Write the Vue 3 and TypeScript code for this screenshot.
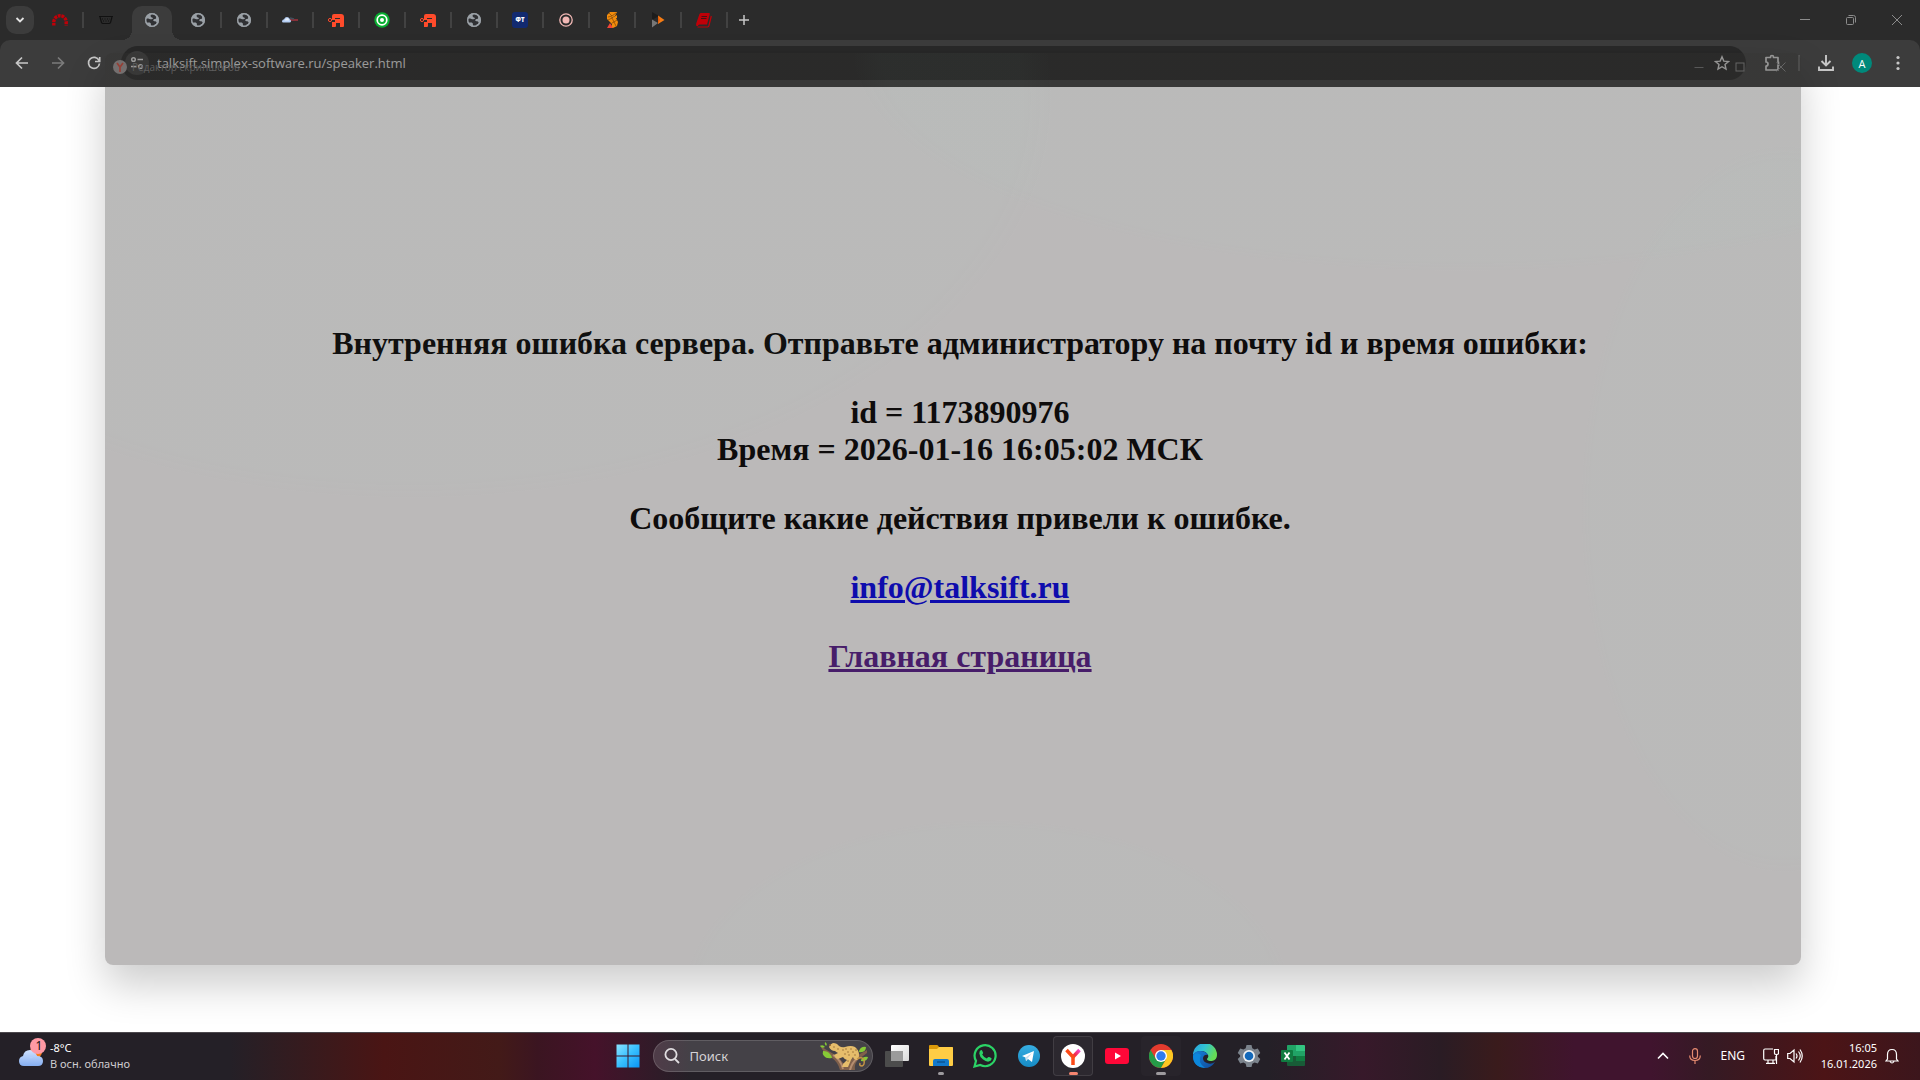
<script setup lang="ts">
import { ref } from 'vue'

interface Tab {
  icon: string
  title: string
  separator: boolean
}

const tabs: Tab[] = [
  { icon: 'arch', title: 'Вкладка 1', separator: true },
  { icon: 'basket', title: 'Вкладка 2', separator: false },
  { icon: 'globe', title: 'talksift', separator: false },
  { icon: 'globe', title: 'Вкладка 4', separator: true },
  { icon: 'globe', title: 'Вкладка 5', separator: true },
  { icon: 'cloud', title: 'Вкладка 6', separator: true },
  { icon: 'robot', title: 'Вкладка 7', separator: true },
  { icon: 'target', title: 'Вкладка 8', separator: true },
  { icon: 'robot', title: 'Вкладка 9', separator: true },
  { icon: 'globe', title: 'Вкладка 10', separator: true },
  { icon: 'ft', title: 'Вкладка 11', separator: true },
  { icon: 'record', title: 'Вкладка 12', separator: true },
  { icon: 'snake', title: 'Вкладка 13', separator: true },
  { icon: 'play', title: 'Вкладка 14', separator: true },
  { icon: 'book', title: 'Вкладка 15', separator: true },
]
const activeTab = 2

const url = ref('talksift.simplex-software.ru/speaker.html')
const search = ref('')
</script>

<template>
  <div class="desktop">
    <header class="browser">
      <div class="tab-strip">
        <button class="tab-search" aria-label="Поиск вкладок">
          <svg width="10" height="10" viewBox="0 0 10 10"><path d="M1.5 3l3.500 3.500L8.500 3" fill="none" stroke="#e3e3e3" stroke-width="1.800" /></svg>
        </button>
        <button
          v-for="(tab, i) in tabs"
          :key="i"
          class="tab"
          :class="{ active: i === activeTab, divided: tab.separator }"
          :aria-label="tab.title"
        >
          <svg class="favicon" width="16" height="16" viewBox="0 0 16 16">
            <g v-if="tab.icon === 'globe'">
              <circle cx="8" cy="8" r="7" fill="#9aa0a6" />
              <path d="M8.500 1.600c-1.500.8-2.300 1.800-1.700 3.100.4.9 2 .5 2.100 1.600.1 1.100-1.300 1-2.700 1-1.300 0-1.500-.7-2.700-.7-.9 0-1.600.5-2 1.200.1 1 .5 2.300 1.100 3.100 1.200-.4 2.900-.6 3.800.1.900.7.200 1.700.7 2.400.3.500.9.900 1.500 1.100 1.300-.3 1.300-1.300 2.100-2.100.8-.7 1.900-.4 2-1.500.1-1-.9-1.700-2.300-1.700-1 0-1.400-.7-1-1.400.5-.8 1.800-.4 2.500-1.200.5-.6.200-1.400 0-2.200-.9-1.500-2-2.400-3.400-2.800z" fill="#303134" />
              <circle cx="8" cy="8" r="6.300" fill="none" stroke="#9aa0a6" stroke-width="1.400" />
            </g>
            <g v-else-if="tab.icon === 'arch'">
              <path d="M1.800 13.500V10A6.200 6.200 0 0 1 14.200 10v3.500" fill="none" stroke="#c00008" stroke-width="3.400" stroke-dasharray="2.800 .8" />
            </g>
            <g v-else-if="tab.icon === 'basket'" fill="none" stroke="#111">
              <path d="M1 4.500h14M2 5l1.500 5.500q.5 1 1.500 1h6q1 0 1.500-1L14 5" stroke-width="1.200" />
              <path d="M4 7h8M5 9h6" stroke-dasharray="1 1.500" />
            </g>
            <g v-else-if="tab.icon === 'cloud'">
              <path d="M8 8h8" stroke="#873039" stroke-width="2" />
              <path d="M8 6l4 1" stroke="#40505c" stroke-width="1.500" />
              <path d="M0 9.500q0-2 2-2.200Q3 5 5 5q2.500 0 3 2.500 1.200.5 1 2-.2 1-1.500 1H1.300Q0 10.500 0 9.500z" fill="#b4cdf2" />
              <path d="M2.500 8.500Q3.500 6 5.500 6q1.500.5 1.500 2.500z" fill="#e8f0fc" />
            </g>
            <g v-else-if="tab.icon === 'robot'">
              <path d="M6 2h7q3 0 3 3v9q0 1-1 1h-3v-4H8v3q0 1-1 1H4v-5h3V8H4V4q0-2 2-2z" fill="#ff4b2b" />
              <path d="M7 6.500h5" stroke="#2b2b2b" stroke-width="1" />
              <circle cx="2" cy="8" r="1.600" fill="#2b2b2b" stroke="#ff4b2b" />
            </g>
            <g v-else-if="tab.icon === 'target'" fill="none">
              <circle cx="8" cy="8" r="7.700" fill="#08ae30" />
              <circle cx="8" cy="8" r="4.800" stroke="#fff" stroke-width="1.700" />
              <circle cx="8" cy="8" r="2" fill="#fff" />
            </g>
            <g v-else-if="tab.icon === 'ft'">
              <rect width="16" height="16" rx="3" fill="#122a70" />
              <text x="8" y="10" text-anchor="middle" class="ft-label">ФТ</text>
            </g>
            <g v-else-if="tab.icon === 'record'">
              <circle cx="8" cy="8" r="6.200" fill="none" stroke="#f2b8b5" stroke-width="1.300" />
              <circle cx="8" cy="8" r="3.500" fill="#f2b8b5" />
            </g>
            <g v-else-if="tab.icon === 'snake'">
              <path d="M3 3l3-3h7l-2 4-4 2h5l2 4-1 4-4 2H7l1-4-5-5z" fill="#f28c0c" />
              <path d="M3 16l3-5 3 5z" fill="#f04438" />
              <path d="M13 0v6H8l5-3z" fill="#f28c0c" />
              <path d="M5 1l3 3 4-3M4 5l4-1M4 8l4-2 2 4 3-2M8 11l2-1 2 4" fill="none" stroke="#6b3906" stroke-width=".6" />
            </g>
            <g v-else-if="tab.icon === 'play'">
              <path d="M2 0l7 4-7 4z" fill="#1c1c1c" />
              <path d="M2 7.500l6 3.500-6 4.500z" fill="#777" />
              <path d="M8 3.500l6.500 4.500L8 12z" fill="#f57c14" />
              <path d="M8 3.500L10 8l-2 4z" fill="#e45b08" />
            </g>
            <g v-else>
              <path d="M5 1h8q1 0 .8 1L11 12.500H3.500q-1.500 0-1.500 1.500H.500q-.6-1-.3-2.500L3.500 2Q4 1 5 1z" fill="#c00008" />
              <path d="M15.300 4L13 13.500q-.3 1.500-1.500 1.500H1.500" fill="none" stroke="#c00008" stroke-width="1.200" />
              <path d="M5.500 4.500h5.500M5 6.500h5.500" stroke="#3c1214" stroke-width=".9" />
            </g>
          </svg>
        </button>
        <button class="new-tab" aria-label="Новая вкладка">
          <svg width="12" height="12" viewBox="0 0 12 12"><path d="M6 1v10M1 6h10" stroke="#c7c7c7" stroke-width="1.500" /></svg>
        </button>
        <div class="window-controls">
          <button aria-label="Свернуть"><svg width="12" height="12" viewBox="0 0 12 12"><path d="M1 5.500h10" stroke="#8c8c8c" /></svg></button>
          <button aria-label="Восстановить"><svg width="12" height="12" viewBox="0 0 12 12" fill="none" stroke="#8c8c8c"><rect x="1.500" y="3.500" width="7" height="7" rx="1" /><path d="M3.500 1.500h5q2 0 2 2v5" /></svg></button>
          <button aria-label="Закрыть"><svg width="12" height="12" viewBox="0 0 12 12"><path d="M1 1l10 10M11 1L1 11" stroke="#8c8c8c" /></svg></button>
        </div>
      </div>

      <div class="toolbar">
        <button class="nav" aria-label="Назад"><svg width="16" height="16" viewBox="0 0 16 16" fill="none" stroke="#c7c7c7" stroke-width="1.700"><path d="M14 8H3M8 2.500L2.500 8 8 13.500" /></svg></button>
        <button class="nav" aria-label="Вперёд"><svg width="16" height="16" viewBox="0 0 16 16" fill="none" stroke="#7b7b7b" stroke-width="1.700"><path d="M2 8h11M8 2.500L13.500 8 8 13.500" /></svg></button>
        <button class="nav" aria-label="Обновить"><svg width="16" height="16" viewBox="0 0 16 16" fill="none" stroke="#c7c7c7" stroke-width="1.700"><path d="M13 5.500A5.500 5.500 0 1 0 13.500 8.500M13.700 2v4.500H9" /></svg></button>
        <div class="omnibox">
          <button class="site-info" aria-label="Сведения о сайте">
            <svg width="14" height="14" viewBox="0 0 14 14" fill="none" stroke="#d0d0d0" stroke-width="1.500"><circle cx="3.500" cy="3.500" r="1.800" /><path d="M7.500 3.500H13M1 10.500h5.500" /><circle cx="10.500" cy="10.500" r="1.800" /></svg>
          </button>
          <input v-model="url" class="url" type="text" aria-label="Адресная строка" />
          <button class="star" aria-label="Добавить в закладки">
            <svg width="16" height="16" viewBox="0 0 16 16"><path d="M8 1.800l1.800 4.300 4.700.4L11 9.500l1 4.600-4-2.400-4 2.400 1-4.600-3.500-3 4.700-.4z" fill="none" stroke="#c7c7c7" stroke-width="1.400" /></svg>
          </button>
        </div>
        <div class="tools">
          <button class="tool" aria-label="Расширения">
            <svg width="18" height="18" viewBox="0 0 18 18"><path d="M3 3.500h4.500V3q0-1.500 1.500-1.500T10.500 3v.5H15V8h.5v3H15v5H3v-4q2 0 2-2T3 8z" fill="none" stroke="#c7c7c7" stroke-width="1.700" stroke-linejoin="round" /></svg>
          </button>
          <span class="tool-divider"></span>
          <button class="tool" aria-label="Загрузки">
            <svg width="18" height="18" viewBox="0 0 18 18" fill="none" stroke="#c7c7c7" stroke-width="1.900"><path d="M9 1v10M4.500 7L9 11.500 13.500 7M2 12.500V16h14v-3.500" /></svg>
          </button>
          <button class="avatar" aria-label="Профиль">A</button>
          <button class="tool" aria-label="Меню">
            <svg width="18" height="18" viewBox="0 0 18 18" fill="#c7c7c7"><circle cx="9" cy="3.500" r="1.600" /><circle cx="9" cy="9" r="1.600" /><circle cx="9" cy="14.500" r="1.600" /></svg>
          </button>
        </div>
      </div>
    </header>

    <main class="page">
      <p>Внутренняя ошибка сервера. Отправьте администратору на почту id и время ошибки:</p>
      <p>id = 1173890976<br />Время = 2026-01-16 16:05:02 МСК</p>
      <p>Сообщите какие действия привели к ошибке.</p>
      <p><a class="mail" href="mailto:info@talksift.ru">info@talksift.ru</a></p>
      <p><a class="home" href="#">Главная страница</a></p>
    </main>

    <!-- Screenshot editor window fading in over the browser -->
    <section class="editor" aria-label="Редактор скриншотов">
      <div class="editor-title">
        <svg width="14" height="14" viewBox="0 0 14 14"><circle cx="7" cy="7" r="7" fill="#746f6f" /><path d="M4 3l3 4 3-4M7 7v5" fill="none" stroke="#963f35" stroke-width="1.700" /></svg>
        <span>Редактор скриншотов</span>
        <div class="editor-controls">
          <svg width="10" height="10" viewBox="0 0 10 10"><path d="M.500 5.500h9" stroke="#585858" /></svg>
          <svg width="10" height="10" viewBox="0 0 10 10"><rect x="1" y="1" width="8" height="8" fill="none" stroke="#656565" /></svg>
          <svg width="10" height="10" viewBox="0 0 10 10"><path d="M.500.500l9 9M9.500.500l-9 9" stroke="#656565" /></svg>
        </div>
      </div>
    </section>

    <footer class="taskbar">
      <button class="weather">
        <svg width="28" height="38" viewBox="0 0 28 38">
          <defs><linearGradient id="cloud" x1="0" y1="0" x2="0" y2="1"><stop offset="0" stop-color="#cfe2ff" /><stop offset="1" stop-color="#86aef0" /></linearGradient></defs>
          <circle cx="17" cy="15" r="6" fill="#f57a18" />
          <path d="M5 29q-5 0-5-5 0-4 4-5 1-6 7-6 5 0 7 6 6 0 6 5 0 5-5 5z" fill="url(#cloud)" />
          <path d="M5 19q4-2 7 2 3-3 6-2" fill="none" stroke="#b5cffb" />
          <circle cx="19" cy="9" r="8" fill="#ff99a4" />
          <text x="20" y="13" text-anchor="middle" class="badge">1</text>
        </svg>
        <span class="weather-text"><span>-8°C</span><span class="muted">В осн. облачно</span></span>
      </button>

      <nav class="apps" aria-label="Панель задач">
        <button class="app" aria-label="Пуск">
          <svg width="24" height="24" viewBox="0 0 24 24">
            <defs><linearGradient id="win" x1="0" y1="0" x2="1" y2="1"><stop offset="0" stop-color="#8ae3ff" /><stop offset=".5" stop-color="#38c0ff" /><stop offset="1" stop-color="#0a93f5" /></linearGradient></defs>
            <path d="M.500.500h11v11h-11zM12.500.500h11v11h-11zM.500 12.500h11v11h-11zM12.500 12.500h11v11h-11z" fill="url(#win)" />
          </svg>
        </button>
        <label class="search">
          <svg width="18" height="18" viewBox="0 0 18 18" fill="none" stroke="#e0dde0" stroke-width="1.800"><circle cx="8" cy="7.500" r="5.600" /><path d="M12 12l4 4" /></svg>
          <input v-model="search" type="text" placeholder="Поиск" aria-label="Поиск" />
          <svg class="leopard" width="50" height="28" viewBox="0 0 50 28">
            <path d="M1 3l5 4q7 4 12 7 4 4 6 7h6q3-6 9-8l9-5v3l-8 6q-5 4-4 11H21q-2-8-8-12Q4 11 1 3z" fill="#80604b" />
            <path d="M14 13q8 5 10 14M31 28q2-8 8-12" fill="none" stroke="#b58d70" stroke-width="2" />
            <path d="M4 9q5 0 7 3 2 2 2 4-6 1-8-2-2-2-1-5zM1 4q3-2 5 1-3 2-5-1zM6 0q3 2 1 4-2-2-1-4zM40 9q2-5 7-4 0 6-7 5zM42 18q2-4 7-3-1 5-7 4z" fill="#86c936" />
            <path d="M10 5q1-3 4-4 4 0 6 3 3 2 6 1 6-2 10 0 4 3 4 8 0 4-2 5-3 0-4-3l-2 3-3 7h-6l1-3 4-4q-3-1-4-3l-5 2q-3-1-4-4l4-2q-2-1-3-2-4 0-6-4z" fill="#e6bd6b" />
            <path d="M38 17q5-3 7 1 1 5-2 6-3 0-2-3" fill="none" stroke="#c49446" stroke-width="1.500" />
            <g fill="#8b6130"><circle cx="24" cy="8" r=".7" /><circle cx="27" cy="7" r=".7" /><circle cx="29" cy="10" r=".7" /><circle cx="32" cy="7" r=".7" /><circle cx="34" cy="10" r=".7" /><circle cx="37" cy="8" r=".7" /><circle cx="30" cy="13" r=".7" /><circle cx="36" cy="13" r=".7" /><circle cx="26" cy="12" r=".7" /><circle cx="29" cy="19" r=".7" /><circle cx="15" cy="5" r=".7" /><circle cx="19" cy="7" r=".7" /><circle cx="11" cy="3" r="1" /></g>
          </svg>
        </label>
        <button class="app" aria-label="Представление задач">
          <svg width="24" height="24" viewBox="0 0 24 24">
            <defs><linearGradient id="tv" x1="0" y1="0" x2="1" y2="1"><stop offset="0" stop-color="#fff" /><stop offset="1" stop-color="#dadada" /></linearGradient></defs>
            <rect x="6" y="1" width="18" height="16" rx="1" fill="url(#tv)" /><rect y="7" width="18" height="16" rx="1" fill="#4c4c4c" /><path d="M6 7h12v10H6z" fill="#9b9b9b" />
          </svg>
        </button>
        <button class="app open" aria-label="Проводник">
          <svg width="24" height="24" viewBox="0 0 24 24">
            <path d="M0 2q0-1 1-1h7q1 0 2 2h13q1 0 1 1v6H0z" fill="#db9909" />
            <path d="M0 5h8l2-2h13q1 0 1 1v17q0 1-1 1H1q-1 0-1-1z" fill="#ffcd45" />
            <path d="M4 22v-5q0-2 2-2h12q2 0 2 2v5z" fill="#1279cc" /><path d="M8 18h8" stroke="#0b5595" stroke-width="1.500" />
          </svg>
        </button>
        <button class="app" aria-label="WhatsApp">
          <svg width="24" height="24" viewBox="0 0 24 24">
            <path d="M1.500 22.500l1.500-5.600A10.500 10.500 0 1 1 7.300 21z" fill="none" stroke="#2bd366" stroke-width="2.200" />
            <path d="M8 6q.8-.2 1.200.7l.9 2q.2.7-.9 1.800 1.700 3 4.600 4.100l1.200-1.400q.5-.5 1.200-.2l2 1q.6.300.4 1-.5 2.300-3 2.600-2.600.3-5.800-2.400T6.300 9.400Q6.300 6.800 8 6z" fill="#2bd366" />
          </svg>
        </button>
        <button class="app" aria-label="Telegram">
          <svg width="22" height="22" viewBox="0 0 22 22">
            <defs><linearGradient id="tg" x1="0" y1="0" x2="0" y2="1"><stop offset="0" stop-color="#37aee2" /><stop offset="1" stop-color="#168ac4" /></linearGradient></defs>
            <circle cx="11" cy="11" r="11" fill="url(#tg)" /><path d="M4 11l12-5-2 11-4-3-2 2-.5-3.500z" fill="#fff" /><path d="M7.500 12.500L14 8l-4 5-2 3z" fill="#c7deed" />
          </svg>
        </button>
        <button class="app current" aria-label="Яндекс Браузер">
          <svg width="24" height="24" viewBox="0 0 24 24">
            <defs><linearGradient id="ya" gradientUnits="userSpaceOnUse" x1="11" y1="14" x2="19" y2="5"><stop offset="0" stop-color="#ff4f12" /><stop offset=".4" stop-color="#f22b4e" /><stop offset="1" stop-color="#f24bea" /></linearGradient></defs>
            <circle cx="12" cy="12" r="12" fill="#fff" /><path d="M12 13l6.500-7" stroke="url(#ya)" stroke-width="3.500" /><path d="M5.500 6l6.500 7v8" fill="none" stroke="#fc4a18" stroke-width="3.500" />
          </svg>
        </button>
        <button class="app" aria-label="YouTube">
          <svg width="24" height="16" viewBox="0 0 24 16"><rect width="24" height="16" rx="3" fill="#ff0838" /><path d="M10 4.500l6 3.500-6 3.500z" fill="#fff" /></svg>
        </button>
        <button class="app open wide hovered" aria-label="Google Chrome">
          <svg width="24" height="24" viewBox="0 0 24 24">
            <circle cx="12" cy="12" r="12" fill="#e33b2e" />
            <path d="M1.600 6A12 12 0 0 0 12 24l5.200-9H6.800z" fill="#259c48" />
            <path d="M12 24A12 12 0 0 0 22.400 6H12l5.200 9z" fill="#fcc822" />
            <circle cx="12" cy="12" r="6" fill="#fff" /><circle cx="12" cy="12" r="4.700" fill="#2f7bed" />
          </svg>
        </button>
        <button class="app" aria-label="Microsoft Edge">
          <svg width="24" height="24" viewBox="0 0 24 24">
            <defs>
              <linearGradient id="e1" x1="0" y1="0" x2="1" y2=".4"><stop offset="0" stop-color="#269ee0" /><stop offset=".5" stop-color="#31c4d4" /><stop offset="1" stop-color="#65db55" /></linearGradient>
              <linearGradient id="e2" x1="0" y1="0" x2="1" y2="1"><stop offset="0" stop-color="#1380da" /><stop offset="1" stop-color="#124b99" /></linearGradient>
            </defs>
            <path d="M0 11A12 12 0 0 1 24 11q0 5-5 6-5 0-5-2 2-2 1-4-2-4-7-4T0 11z" fill="url(#e1)" />
            <path d="M0 11q2-4 7-4 6 0 8 4-4-1-5 3 0 4 4 5 4 2 8-1-4 6-10 6Q0 23 0 11z" fill="url(#e2)" />
            <path d="M8 11q-4 7 4 13Q0 23 0 12q3-5 8-1z" fill="#0c87db" />
          </svg>
        </button>
        <button class="app" aria-label="Параметры">
          <svg width="24" height="24" viewBox="0 0 24 24">
            <path d="M9.500 1h5l.8 3.200 2.300 1.300 3.200-.9 2.500 4.300-2.400 2.300v1.600l2.400 2.300-2.500 4.300-3.200-.9-2.300 1.300-.8 3.200h-5l-.8-3.200-2.300-1.300-3.200.9L.700 15.100l2.400-2.300v-1.600L.700 8.900l2.500-4.300 3.200.9 2.300-1.300z" fill="#7b838c" />
            <circle cx="12" cy="12" r="6" fill="#edf0f2" /><circle cx="12" cy="12" r="4.300" fill="#1268b9" />
          </svg>
        </button>
        <button class="app" aria-label="Excel">
          <svg width="24" height="22" viewBox="0 0 24 22">
            <rect x="6" width="18" height="21" rx="1" fill="#185c37" /><path d="M6 1q0-1 1-1h8v11H6z" fill="#21a366" /><path d="M15 0h8q1 0 1 1v5h-9z" fill="#33c481" /><path d="M15 6h9v5h-9z" fill="#21a366" /><path d="M15 11h9v5h-9z" fill="#107c41" />
            <rect y="5" width="12" height="12" rx="1" fill="#107c41" /><path d="M3.500 7.500l5 7M8.500 7.500l-5 7" stroke="#fff" stroke-width="1.800" />
          </svg>
        </button>
      </nav>

      <div class="tray">
        <button class="tray-item chevron" aria-label="Скрытые значки"><svg width="12" height="12" viewBox="0 0 12 12"><path d="M1 8.500l5-5 5 5" fill="none" stroke="#fff" stroke-width="1.600" /></svg></button>
        <button class="tray-item mic" aria-label="Микрофон"><svg width="12" height="16" viewBox="0 0 12 16" fill="none" stroke="#e58a70" stroke-width="1.200"><rect x="3.500" y=".7" width="5" height="9.800" rx="2.500" /><path d="M.700 7.500q0 5 5.300 5t5.300-5M6 12.500V16" /></svg></button>
        <button class="tray-item lang">ENG</button>
        <button class="tray-item net" aria-label="Сеть и звук">
          <svg width="16" height="16" viewBox="0 0 16 16" fill="none" stroke="#fff" stroke-width="1.200"><path d="M10 1H2Q.700 1 .700 2.500v8q0 1.500 1.300 1.500h11V8M5 12v3M10 12v3M3 15.300h9" /><path d="M11.500 1.500v4q0 1 2 1t2-1v-4zM13.500 6.500V16" /></svg>
          <svg width="16" height="16" viewBox="0 0 16 16" fill="none" stroke="#fff" stroke-width="1.200"><path d="M.700 5.500v5H3l4 3.500V2L3 5.500zM9 5.500q2 2.500 0 5M11.500 3.500q3.500 4.500 0 9M13 1.500q4.500 6.500 0 13" /></svg>
        </button>
        <button class="clock"><span>16:05</span><span>16.01.2026</span></button>
        <button class="tray-item bell" aria-label="Уведомления"><svg width="14" height="16" viewBox="0 0 14 16" fill="none" stroke="#fff" stroke-width="1.200"><path d="M2.500 11V6.500Q2.500 1.500 7 1.500t4.500 5V11l1.500 2H1zM5 13.500q2 3 4 0" /></svg></button>
      </div>
    </footer>
  </div>
</template>

<style>
body {
  margin: 0;
}
</style>

<style scoped>
* {
  box-sizing: border-box;
}

button {
  display: flex;
  align-items: center;
  justify-content: center;
  padding: 0;
  border: 0;
  background: none;
  color: inherit;
  font: inherit;
}

input {
  min-width: 0;
  padding: 0;
  border: 0;
  outline: 0;
  background: none;
  font: inherit;
}

svg {
  flex: none;
}

.desktop {
  position: relative;
  display: flex;
  flex-direction: column;
  min-height: 100vh;
  overflow: hidden;
  background: #fff;
  font-family: 'Open Sans', 'Noto Sans', sans-serif;
}

/* Browser chrome */
.browser {
  background: #2b2b2b;
}

.tab-strip {
  display: flex;
  align-items: center;
  height: 40px;
  padding-left: 6px;
}

.tab-search {
  width: 28px;
  height: 28px;
  margin-right: 3px;
  border-radius: 10px;
  background: #3c3c3c;
}

.tab {
  position: relative;
  width: 46px;
  height: 40px;
}

.tab.divided::after {
  content: '';
  position: absolute;
  right: -1px;
  top: 12px;
  width: 2px;
  height: 16px;
  background: #424242;
}

.tab.active::before {
  content: '';
  position: absolute;
  inset: 6px 3px 0;
  border-radius: 10px 10px 0 0;
  background: #3c3c3c;
}

.tab.active::after {
  content: '';
  position: absolute;
  inset: 30px -7px 0;
  background:
    radial-gradient(circle at 0 0, transparent 10px, #3c3c3c 10px) left / 10px 10px no-repeat,
    radial-gradient(circle at 100% 0, transparent 10px, #3c3c3c 10px) right / 10px 10px no-repeat;
}

.favicon {
  position: relative;
}

.ft-label {
  fill: #fff;
  font: 800 6px 'Open Sans', sans-serif;
}

.new-tab {
  width: 34px;
  height: 32px;
}

.window-controls {
  display: flex;
  margin-left: auto;
}

.window-controls button {
  width: 46px;
  height: 40px;
}

.toolbar {
  display: flex;
  align-items: center;
  height: 47px;
  padding: 0 4px 1px;
  border-radius: 10px 10px 0 0;
  background: #3c3c3c;
}

.nav {
  width: 36px;
  height: 36px;
}

.omnibox {
  display: flex;
  flex: 1;
  align-items: center;
  height: 34px;
  margin-left: 9px;
  padding: 0 16px 0 4px;
  border-radius: 17px;
  background: #282828;
}

.site-info {
  width: 24px;
  height: 24px;
  margin-right: 8px;
  border-radius: 12px;
  background: #3c3c3c;
}

.url {
  flex: 1;
  height: 20px;
  color: #d0d0d0;
  font-size: 13px;
}

.tools {
  display: flex;
  align-items: center;
  margin-left: 8px;
}

.tool {
  width: 36px;
  height: 36px;
}

.tool-divider {
  width: 2px;
  height: 16px;
  margin: 0 8px;
  background: #5a5a5a;
}

.avatar {
  width: 20px;
  height: 20px;
  margin: 0 8px;
  border-radius: 10px;
  background: #00897b;
  color: #fff;
  font-size: 11px;
}

/* Error page */
.page {
  display: flex;
  flex: 1;
  flex-direction: column;
  gap: 32px;
  padding: 238px 8px 32px;
  color: #000;
  font: bold 32px/37px 'Liberation Serif', 'Times New Roman', serif;
  text-align: center;
}

.page p {
  margin: 0;
}

.mail {
  color: #0000ee;
}

.home {
  color: #551a8b;
}

/* Translucent window over the browser */
.editor {
  position: absolute;
  inset: 53px 119px 115px 105px;
  border-radius: 8px;
  background:
    radial-gradient(ellipse 38% 44% at 18% 5%, rgba(130, 220, 190, 0.02) 95%, transparent),
    radial-gradient(ellipse 18% 20% at 52% 104%, rgba(130, 220, 190, 0.02) 95%, transparent),
    radial-gradient(ellipse 12% 40% at 99% 50%, rgba(130, 220, 190, 0.02) 95%, transparent),
    radial-gradient(ellipse 36% 24% at 80% 0%, rgba(130, 220, 190, 0.02) 95%, transparent),
    rgba(44, 36, 38, 0.32);
  box-shadow: 0 20px 40px rgba(0, 0, 0, 0.2);
  pointer-events: none;
}

.editor-title {
  display: flex;
  align-items: center;
  height: 27px;
  padding: 0 15px 0 8px;
  color: #5e5e5e;
  font-size: 10px;
}

.editor-title span {
  margin-left: 5px;
}

.editor-controls {
  display: flex;
  gap: 31px;
  margin-left: auto;
}

/* Windows taskbar */
.taskbar {
  position: relative;
  display: grid;
  grid-template-columns: 1fr auto 1fr;
  align-items: center;
  height: 48px;
  box-shadow: inset 0 1px #4c484d;
  background: linear-gradient(
    90deg,
    #242027 0%, #242027 12%, #4a1514 20%, #431a18 26%, #3b1521 28%, #45122a 31%,
    #242027 36%, #242027 66%, #37192a 71%, #2a1c24 75%, #3a1b1c 78%, #40142e 82%,
    #40142e 86%, #351a24 89%, #4c1416 95%, #3c161c 100%
  );
  color: #fff;
  font-family: 'Noto Sans', sans-serif;
  font-size: 12px;
  line-height: 16px;
}

.weather {
  justify-self: start;
  gap: 3px;
  padding-left: 19px;
}

.badge {
  fill: #111;
  font: 12px 'Noto Sans', sans-serif;
}

.weather-text {
  display: flex;
  flex-direction: column;
  align-items: flex-start;
  font-size: 11px;
}

.muted {
  color: #cfccd0;
}

.apps {
  display: flex;
  align-items: center;
}

.app {
  position: relative;
  width: 44px;
  height: 46px;
}

.app.current::before,
.app.hovered::before {
  content: '';
  position: absolute;
  inset: 3px 2px;
  border: 1px solid rgba(255, 255, 255, 0.1);
  border-radius: 4px;
  background: rgba(255, 255, 255, 0.04);
}

.app.hovered::before {
  border-color: transparent;
  background: rgba(255, 255, 255, 0.02);
}

.app svg {
  position: relative;
}

.app.open::after,
.app.current::after {
  content: '';
  position: absolute;
  bottom: 4px;
  left: 19px;
  width: 6px;
  height: 3px;
  border-radius: 2px;
  background: #9d9a9e;
}

.app.wide::after {
  left: 17px;
  width: 10px;
}

.app.current::after {
  left: 18px;
  width: 9px;
  background: #f58570;
}

.search {
  display: flex;
  align-items: center;
  width: 220px;
  height: 32px;
  margin: 0 2px 0 3px;
  padding: 0 3px 0 9px;
  border: 1px solid rgba(255, 255, 255, 0.15);
  border-radius: 16px;
  background: rgba(255, 255, 255, 0.15);
}

.search input {
  flex: 1;
  margin-left: 9px;
  color: #d5d2d6;
  font-size: 13px;
}

.search input::placeholder {
  color: #d5d2d6;
  opacity: 1;
}

.tray {
  display: flex;
  align-items: center;
  justify-self: end;
  padding-right: 21px;
}

.tray-item {
  height: 40px;
}

.chevron,
.mic {
  width: 32px;
}

.lang {
  width: 44px;
}

.net {
  gap: 8px;
  margin: 0 8px;
}

.clock {
  flex-direction: column;
  align-items: flex-end;
  margin: 0 8px 0 10px;
  font-size: 11px;
}
</style>
